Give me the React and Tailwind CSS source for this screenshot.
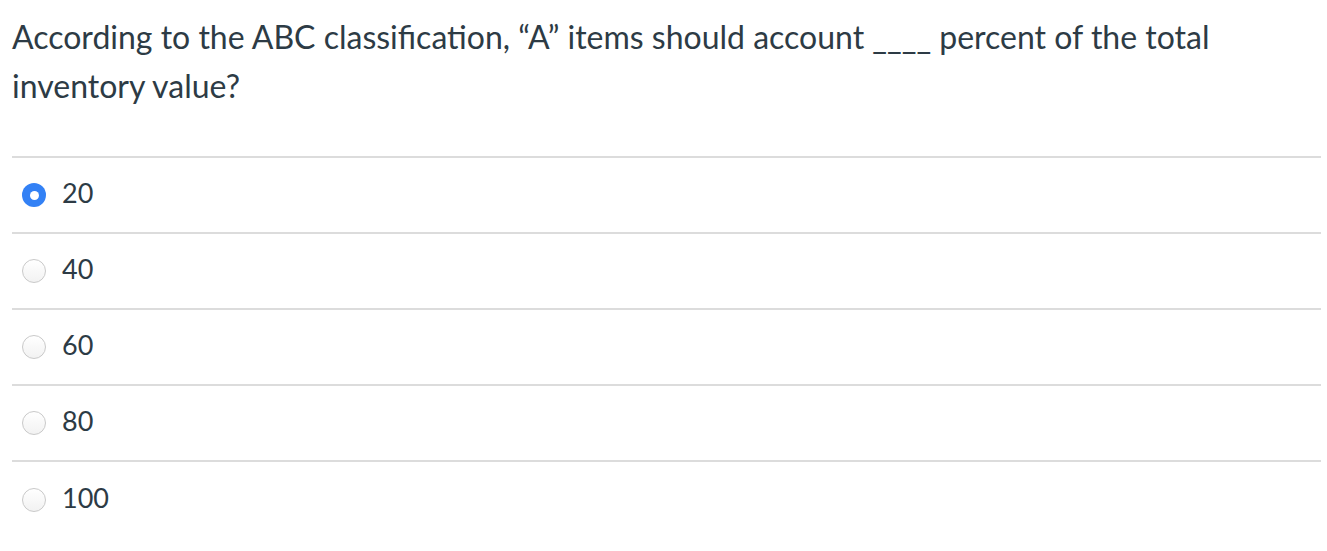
export default function App() {
  const options = ["20", "40", "60", "80", "100"];
  return (
    <div className="w-[1327px] h-[551px] bg-white text-[#2d3b45]" style={{ fontFamily: "Lato, 'Open Sans', sans-serif" }}>
      <div className="pl-[12px] pr-[6px]">
        <p className="pt-[12px] text-[32px] leading-[49px] m-0">
          According to the ABC classification, “A” items should account ____ percent of the total inventory value?
        </p>
        <div className="mt-[46px] border-t-2 border-[#dcdcdc]">
          {options.map((o, i) => (
            <div key={o} className={`flex items-center h-[76px] ${i < options.length - 1 ? "border-b-2 border-[#dcdcdc]" : ""}`}>
              <div className="w-[44px] flex justify-center">
                {i === 0 ? (
                  <div className="w-[24px] h-[24px] rounded-full bg-[#3381f5] flex items-center justify-center">
                    <div className="w-[9px] h-[9px] rounded-full bg-white" />
                  </div>
                ) : (
                  <div className="w-[24px] h-[24px] rounded-full border border-[#c9c9c9] bg-gradient-to-b from-white to-[#f2f2f2]" />
                )}
              </div>
              <span className="ml-[6px] text-[27px] -mt-[3px]">{o}</span>
            </div>
          ))}
        </div>
      </div>
    </div>
  );
}
